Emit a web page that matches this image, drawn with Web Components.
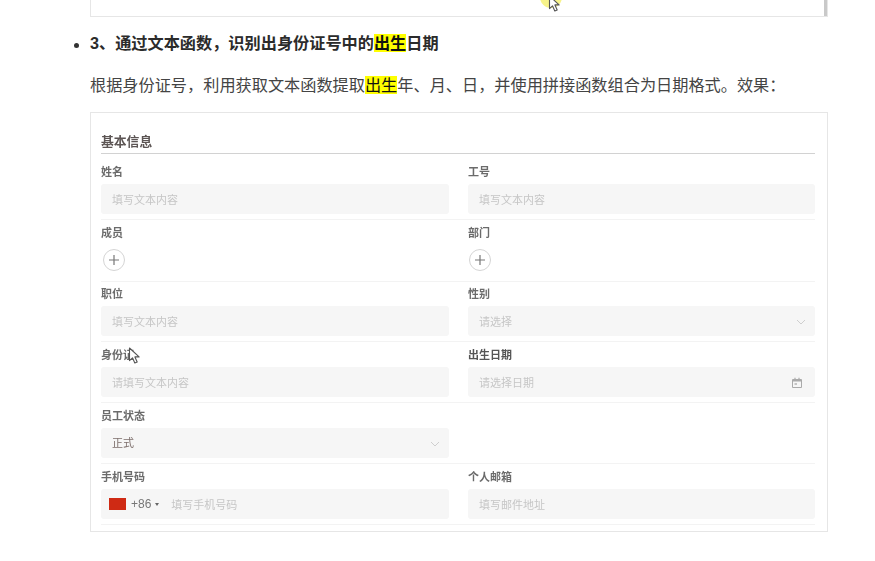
<!DOCTYPE html>
<html lang="zh"><head><meta charset="utf-8"><title>出生日期</title>
<style>
html,body{margin:0;padding:0;background:#fff;overflow:hidden}
body{font-family:"Liberation Sans","Noto Sans CJK SC",sans-serif;color:#333}
</style></head>
<body>
<template id="t-shot"><style>
:host{display:block;position:relative;box-sizing:border-box;width:738px;margin-left:90px;border:1px solid #e6e6e6;background:#fff}
</style><slot></slot></template>

<template id="t-mark"><style>
:host{display:inline-block;background:#ff0;color:#111;line-height:18px;height:18px;vertical-align:baseline}
</style><slot></slot></template>

<template id="t-cursor"><style>
:host{display:block;position:absolute;width:14px;height:20px;z-index:3}
svg{display:block}
</style><svg width="14" height="20" viewBox="0 0 14 20"><path d="M1.5 1v12.6l3-2.8 2.3 5.2 2.4-1-2.3-5.1h4.2z" fill="#fff" stroke="#555" stroke-width="1.1" stroke-linejoin="round"/></svg></template>

<template id="t-row"><style>
:host{display:grid;grid-template-columns:348px 347px;column-gap:19px;height:60px;border-bottom:1px solid #f3f3f3}
</style><slot></slot></template>

<template id="t-field"><style>
:host{display:block;min-width:0}
.l{height:25px;font:700 11px/25px "Noto Sans CJK SC",sans-serif;color:#6b6b6b}
</style><div class="l"><slot name="label"></slot></div><slot></slot></template>

<template id="t-input"><style>
:host{display:flex;align-items:center;box-sizing:border-box;height:30px;background:#f6f6f6;border-radius:3px;padding:0 11px;font:11px/30px "Noto Sans CJK SC",sans-serif;color:#c6c6c6}
.s{flex:1;min-width:0}
</style><div class="s"><slot></slot></div><slot name="end"></slot></template>

<template id="t-add"><style>
:host{display:flex;box-sizing:border-box;width:22px;height:22px;margin:4px 0 0 2px;border:1px solid #d4d4d4;border-radius:50%;align-items:center;justify-content:center;background:#fff}
svg{display:block}
</style><svg width="12" height="12" viewBox="0 0 12 12"><path d="M6 1v10M1 6h10" stroke="#777" stroke-width="1.2"/></svg></template>

<template id="t-chev"><style>
:host{display:block;width:10px;height:6px;margin:2px -2px 0 0}
svg{display:block}
</style><svg width="10" height="6" viewBox="0 0 10 6"><path d="M1 1l4 4 4-4" fill="none" stroke="#cfcfcf" stroke-width="1"/></svg></template>

<template id="t-cal"><style>
:host{display:block;width:10px;height:11px;margin:0 2px 0 0}
svg{display:block}
</style><svg width="10" height="11" viewBox="0 0 10 11"><path d="M.5 2.5h9v8h-9z" fill="none" stroke="#aaa"/><path d="M1 2h8v2.5H1zM2.4 .8h1.2V2H2.4zM6.4 .8h1.2V2H6.4z" fill="#aaa"/><path d="M2.5 6h2.5v2H2.5z" fill="#c4c4c4"/></svg></template>

<template id="t-phone"><style>
:host{display:flex;align-items:center;box-sizing:border-box;height:30px;background:#f6f6f6;border-radius:3px;padding-left:8px;font:11px/30px "Noto Sans CJK SC",sans-serif;color:#c6c6c6}
.f{width:17px;height:12px;background:#cf2a14;margin-right:5px}
.c{font:12px/30px "Liberation Sans",sans-serif;color:#777;margin-right:4px}
.t{width:0;height:0;border:2.5px solid transparent;border-top:3px solid #666;border-bottom:0;margin-right:12px}
</style><span class="f"></span><span class="c">+86</span><span class="t"></span><slot></slot></template>

<template id="t-form"><style>
:host{display:block;padding:15px 12px 0 10px;filter:blur(.5px)}
.h{height:26px;margin-bottom:5px;box-sizing:border-box;border-bottom:1px solid #d2d2d2;font:700 12.8px/25px "Noto Sans CJK SC",sans-serif;color:#5c5554}
</style><div class="h"><slot name="title"></slot></div><slot></slot></template>

<template id="t-doc"><style>
:host{display:block;position:relative;width:875px;height:561px;overflow:hidden;background:#fff}
ul{margin:0;padding:0;height:54px;list-style:none;position:relative}
li{position:absolute;left:90px;top:16px;font:700 16.18px/20px "Liberation Sans","Noto Sans CJK SC",sans-serif;color:#2b2b2b;white-space:nowrap}
li::before{content:"";position:absolute;left:-16px;top:10px;width:5px;height:5px;border-radius:50%;background:#333}
p{margin:0 0 0 90px;height:41px;font:16.18px/20px "Liberation Sans","Noto Sans CJK SC",sans-serif;color:#444;white-space:nowrap;padding-top:4px;box-sizing:border-box}
</style><slot name="top"></slot><ul><li><slot name="head"></slot></li></ul><p><slot name="para"></slot></p><slot></slot></template>

<doc-page>
  <shot-box slot="top" style="height:17px;border-top:0;overflow:hidden">
    <div style="position:absolute;right:0;top:0;width:3px;height:16px;background:#c9c9c9"></div>
    <div style="position:absolute;left:449px;top:-14px;width:22px;height:22px;border-radius:50%;background:#f7f38a"></div>
    <mouse-cursor style="left:457px;top:-5px"></mouse-cursor>
  </shot-box>
  <span slot="head">3、通过文本函数，识别出身份证号中的<hi-mark>出生</hi-mark>日期</span>
  <span slot="para">根据身份证号，利用获取文本函数提取<hi-mark>出生</hi-mark>年、月、日，并使用拼接函数组合为日期格式。效果：</span>
  <shot-box style="height:420px">
    <info-form>
      <span slot="title">基本信息</span>
      <form-row>
        <form-field><span slot="label">姓名</span><fake-input>填写文本内容</fake-input></form-field>
        <form-field><span slot="label">工号</span><fake-input>填写文本内容</fake-input></form-field>
      </form-row>
      <form-row style="height:61px">
        <form-field><span slot="label">成员</span><add-btn></add-btn></form-field>
        <form-field><span slot="label">部门</span><add-btn style="margin-left:1px"></add-btn></form-field>
      </form-row>
      <form-row style="height:59px">
        <form-field style="margin-top:-1px"><span slot="label">职位</span><fake-input>填写文本内容</fake-input></form-field>
        <form-field style="margin-top:-1px"><span slot="label">性别</span><fake-input>请选择<chev-icon slot="end"></chev-icon></fake-input></form-field>
      </form-row>
      <form-row>
        <form-field><span slot="label">身份证</span><fake-input>请填写文本内容</fake-input></form-field>
        <form-field><span slot="label" style="color:#555">出生日期</span><fake-input>请选择日期<cal-icon slot="end"></cal-icon></fake-input></form-field>
      </form-row>
      <form-row>
        <form-field><span slot="label">员工状态</span><fake-input><span style="display:block;line-height:28px;height:30px;color:#7d6f6c">正式</span><chev-icon slot="end"></chev-icon></fake-input></form-field>
        <div></div>
      </form-row>
      <form-row>
        <form-field><span slot="label">手机号码</span><phone-input>填写手机号码</phone-input></form-field>
        <form-field><span slot="label">个人邮箱</span><fake-input>填写邮件地址</fake-input></form-field>
      </form-row>
    </info-form>
    <mouse-cursor style="left:37px;top:234px"></mouse-cursor>
  </shot-box>
</doc-page>

<script>
const reg=(tag,id)=>customElements.define(tag,class extends HTMLElement{
  constructor(){super();this.attachShadow({mode:'open'}).appendChild(document.getElementById(id).content.cloneNode(true));}
});
[['doc-page','t-doc'],['shot-box','t-shot'],['hi-mark','t-mark'],['mouse-cursor','t-cursor'],['form-row','t-row'],['form-field','t-field'],['fake-input','t-input'],['add-btn','t-add'],['chev-icon','t-chev'],['cal-icon','t-cal'],['phone-input','t-phone'],['info-form','t-form']].forEach(a=>reg(a[0],a[1]));
</script>
</body></html>
